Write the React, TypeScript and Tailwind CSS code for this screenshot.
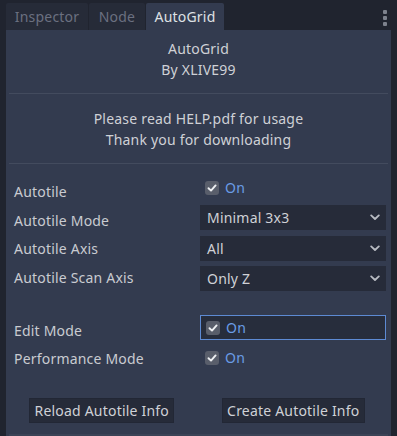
import React from 'react'

const font = { fontFamily: '"Noto Sans", "Open Sans", sans-serif' }

function Tab({ label, active, width }: { label: string; active?: boolean; width: string }) {
  return (
    <div
      className={`${width} h-[27px] flex items-center justify-center text-[14px] leading-[20px] rounded-t-[2px] ${
        active ? 'bg-[#333b4f] text-[#dfe1e5]' : 'bg-[#262b38] text-[#6b7080]'
      }`}
    >
      {label}
    </div>
  )
}

function CheckBox() {
  return (
    <div className="w-[14px] h-[14px] rounded-[3px] bg-[#595e6b] flex items-center justify-center">
      <svg width="10" height="10" viewBox="0 0 10 10">
        <path d="M1.5 5.2 L4 7.6 L8.6 2.4" fill="none" stroke="#eef0f3" strokeWidth="1.9" strokeLinecap="round" strokeLinejoin="round" />
      </svg>
    </div>
  )
}

function Toggle({ height }: { height: string }) {
  return (
    <div className={`flex items-center gap-[6px] pl-[5px] ${height}`}>
      <CheckBox />
      <span className="text-[#6a9ce6] leading-[20px]">On</span>
    </div>
  )
}

function Dropdown({ value }: { value: string }) {
  return (
    <div className="w-[186px] h-[25px] bg-[#262b39] flex items-center justify-between pl-[7px] pr-[6px]">
      <span className="text-[#cfd1d6] leading-[20px] pt-px">{value}</span>
      <svg width="10" height="7" viewBox="0 0 10 7">
        <path d="M1.2 1.4 L5 5 L8.8 1.4" fill="none" stroke="#b9bcc3" strokeWidth="1.8" strokeLinecap="round" strokeLinejoin="round" />
      </svg>
    </div>
  )
}

function Row({ label, pad, children, className = '' }: { label: string; pad: string; children: React.ReactNode; className?: string }) {
  return (
    <div className={`flex items-start pl-[8px] ${className}`}>
      <div className={`w-[186px] leading-[20px] text-[#c9cbd1] ${pad}`}>{label}</div>
      {children}
    </div>
  )
}

export default function App() {
  return (
    <div className="w-[397px] h-[436px] bg-[#20242f] flex flex-col overflow-hidden text-[14px] tracking-[0.2px]" style={font}>
      {/* Tab bar */}
      <div className="h-[32px] flex items-end pl-[6px] pr-[10px]">
        <div className="flex gap-px">
          <Tab label="Inspector" width="w-[82px]" />
          <Tab label="Node" width="w-[56px]" />
          <Tab label="AutoGrid" width="w-[78px]" active />
        </div>
        <div className="ml-auto self-start mt-[10px] flex flex-col gap-[2px]">
          <div className="w-[4px] h-[4px] rounded-[1px] bg-[#7d828d]" />
          <div className="w-[4px] h-[4px] rounded-[1px] bg-[#7d828d]" />
          <div className="w-[4px] h-[4px] rounded-[1px] bg-[#7d828d]" />
        </div>
      </div>

      {/* Panel */}
      <div className="mx-[6px] flex-1 bg-[#333b4f] flex flex-col">
        <div className="pt-[8px] text-center leading-[21px] text-[#cfd1d6]">
          <div>AutoGrid</div>
          <div>By XLIVE99</div>
        </div>
        <div className="mt-[13px] mx-[3px] h-px bg-[#434b5e]" />
        <div className="mt-[14px] text-center leading-[21px] text-[#cfd1d6]">
          <div>Please read HELP.pdf for usage</div>
          <div>Thank you for downloading</div>
        </div>
        <div className="mt-[13px] mx-[3px] h-px bg-[#434b5e]" />

        <Row label="Autotile" pad="pt-[5px]" className="mt-[13px] h-[26px]">
          <Toggle height="h-[22px]" />
        </Row>
        <Row label="Autotile Mode" pad="pt-[6px]" className="mt-[2px]">
          <Dropdown value="Minimal 3x3" />
        </Row>
        <Row label="Autotile Axis" pad="pt-[3px]" className="mt-[5px]">
          <Dropdown value="All" />
        </Row>
        <Row label="Autotile Scan Axis" pad="pt-[2px]" className="mt-[5px]">
          <Dropdown value="Only Z" />
        </Row>

        <Row label="Edit Mode" pad="pt-[6px]" className="mt-[24px]">
          <div className="w-[186px] h-[25px] bg-[#272d3c] border border-[#5d8ad3] flex items-center">
            <Toggle height="h-[23px]" />
          </div>
        </Row>
        <Row label="Performance Mode" pad="pt-[2px]" className="mt-[6px] h-[22px]">
          <Toggle height="h-[22px]" />
        </Row>

        <div className="mt-[29px] flex">
          <div className="flex-1 flex justify-center">
            <button className="w-[145px] h-[25px] bg-[#262b39] border border-[#222735] text-[#cfd1d6] leading-[20px]">
              Reload Autotile Info
            </button>
          </div>
          <div className="flex-1 flex justify-center pr-[2px]">
            <button className="w-[143px] h-[25px] bg-[#262b39] border border-[#222735] text-[#cfd1d6] leading-[20px]">
              Create Autotile Info
            </button>
          </div>
        </div>
        <div className="mt-[11px] mx-[3px] h-[2px] bg-[#3b4356]" />
      </div>
    </div>
  )
}
